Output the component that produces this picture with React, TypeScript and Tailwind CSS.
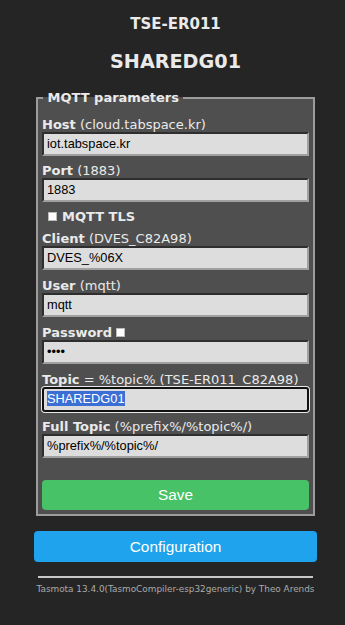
const field = "h-[24px] w-full border-2 border-t-[#2e2e2e] border-l-[#2e2e2e] border-r-[#a0a0a0] border-b-[#a0a0a0] bg-[#dddddd] pl-[3px] font-['Liberation_Sans',Arial,sans-serif] text-[12.8px] leading-[20px] text-black";

function Label({ b, rest, mt = "mt-[8px]" }: { b: string; rest: string; mt?: string }) {
  return (
    <div className={`${mt} text-[13px] leading-[15px] whitespace-nowrap`}>
      <b>{b}</b> {rest}
    </div>
  );
}

function Box() {
  return <span className="inline-block h-[9px] w-[9px] border border-[#bbb] bg-white align-[-1px]" />;
}

export default function App() {
  return (
    <div className="min-h-screen bg-[#252525] font-['DejaVu_Sans',Verdana,sans-serif] text-[#eaeaea]">
      <div className="ml-[34px] w-[283px] pt-[15px]">
        <div className="text-center text-[15px] font-bold leading-[18px]">TSE-ER011</div>
        <div className="mt-[18px] text-center text-[19.2px] font-bold leading-[22px]">SHAREDG01</div>

        <fieldset className="mx-[2px] mt-[17px] border-2 border-[#9c9c9c] bg-[#4f4f4f] px-[4px] pb-[4px]">
          <legend className="ml-[1px] text-[13px] font-bold leading-[15px]">&nbsp;MQTT parameters&nbsp;</legend>

          <Label b="Host" rest="(cloud.tabspace.kr)" mt="mt-[12px]" />
          <div className={field}>iot.tabspace.kr</div>

          <Label b="Port" rest="(1883)" mt="mt-[7px]" />
          <div className={field}>1883</div>

          <div className="mt-[7px] flex h-[15px] items-center gap-[5px] pl-[6px] text-[13px] font-bold leading-[15px]">
            <Box />
            <span>MQTT TLS</span>
          </div>

          <Label b="Client" rest="(DVES_C82A98)" mt="mt-[7px]" />
          <div className={field}>DVES_%06X</div>

          <Label b="User" rest="(mqtt)" />
          <div className={field}>mqtt</div>

          <div className="mt-[8px] flex items-center gap-[4px] text-[13px] font-bold leading-[15px]">
            <span>Password</span>
            <Box />
          </div>
          <div className={field}>••••</div>

          <Label b="Topic" rest="= %topic% (TSE-ER011_C82A98)" />
          <div className="h-[25px] w-full rounded-[3px] border-2 border-[#111] bg-[#dddddd] pl-[3px] font-['Liberation_Sans',Arial,sans-serif] text-[12.8px] leading-[20px] text-black ring-1 ring-[#e8e8e8]">
            <span className="bg-[#3b6fd6] text-white">SHAREDG01</span>
          </div>

          <Label b="Full Topic" rest="(%prefix%/%topic%/)" mt="mt-[7px]" />
          <div className={field}>%prefix%/%topic%/</div>

          <button className="mt-[22px] h-[30px] w-full rounded-[4px] bg-[#47c266] font-['Liberation_Sans',Arial,sans-serif] text-[15.4px] text-white">
            Save
          </button>
        </fieldset>

        <button className="mt-[15px] h-[31px] w-full rounded-[4px] bg-[#1fa3ec] font-['Liberation_Sans',Arial,sans-serif] text-[15.4px] text-white">
          Configuration
        </button>

        <div className="mx-[4px] mt-[14px] h-[2px] bg-[#c8c8c8]" />
        <div className="mt-[5px] text-center text-[8.9px] leading-[12px] whitespace-nowrap text-[#aaaaaa]">
          Tasmota 13.4.0(TasmoCompiler-esp32generic) by Theo Arends
        </div>
      </div>
    </div>
  );
}
